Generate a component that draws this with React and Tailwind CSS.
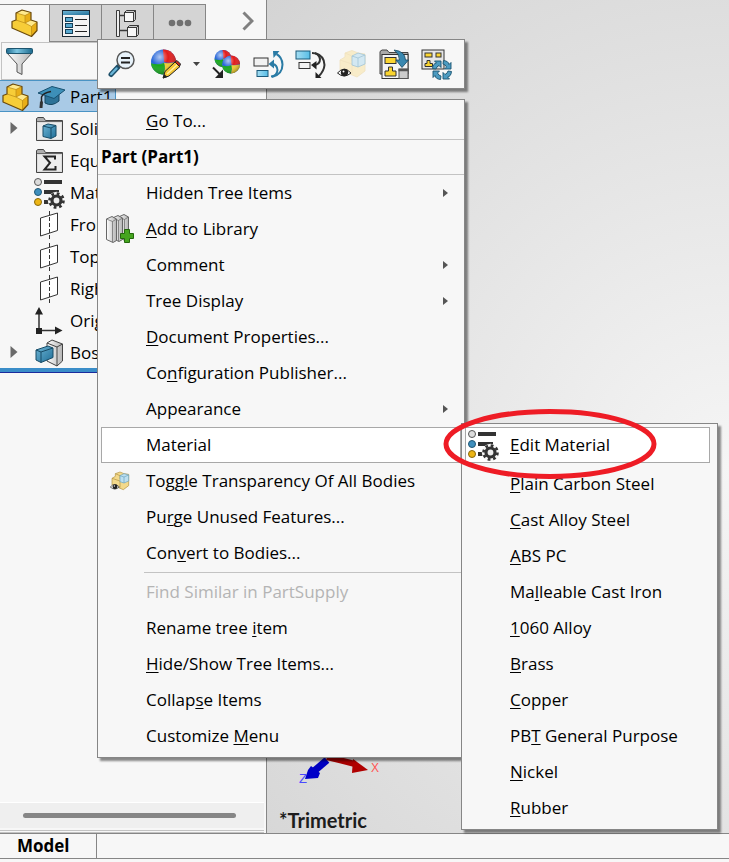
import { useState } from "react";

const treeItems = [
  { label: "Solids", icon: "solid", expandable: true },
  { label: "Equations", icon: "equations" },
  { label: "Material", icon: "material" },
  { label: "Front", icon: "plane" },
  { label: "Top", icon: "plane" },
  { label: "Right", icon: "plane" },
  { label: "Origin", icon: "origin" },
  { label: "Boss", icon: "boss", expandable: true },
];

// "&" marks the mnemonic letter
const partItems = [
  { label: "Hidden Tree Items", submenu: true },
  { label: "&Add to Library", icon: "library" },
  { label: "Comment", submenu: true },
  { label: "Tree Display", submenu: true },
  { label: "&Document Properties..." },
  { label: "Co&nfiguration Publisher..." },
  { label: "Appearance", submenu: true },
  { label: "Material", materials: true },
  { label: "Togg&le Transparency Of All Bodies", icon: "transparency" },
  { label: "Pu&rge Unused Features..." },
  { label: "Con&vert to Bodies..." },
];

const treeCommands = [
  { label: "Find Similar in PartSupply", disabled: true },
  { label: "Rename tree &item" },
  { label: "&Hide/Show Tree Items..." },
  { label: "Collap&se Items" },
  { label: "Customize &Menu" },
];

const materials = [
  "&Plain Carbon Steel",
  "&Cast Alloy Steel",
  "&ABS PC",
  "Ma&lleable Cast Iron",
  "&1060 Alloy",
  "&Brass",
  "&Copper",
  "PB&T General Purpose",
  "&Nickel",
  "&Rubber",
];

function Gradients() {
  return (
    <svg width="0" height="0" className="absolute" aria-hidden="true">
      <defs>
        <linearGradient id="blue" x1="0" y1="0" x2="1" y2="1">
          <stop offset="0" stopColor="#6fb6d6" />
          <stop offset="1" stopColor="#1f6e97" />
        </linearGradient>
        <linearGradient id="band" x1="0" y1="0" x2="1" y2="0">
          <stop offset="0" stopColor="#1d6a8e" />
          <stop offset="0.4" stopColor="#7cc6e2" />
          <stop offset="1" stopColor="#1d6a8e" />
        </linearGradient>
        <linearGradient id="sky" x1="0" y1="0" x2="1" y2="0">
          <stop offset="0" stopColor="#a6def3" />
          <stop offset="1" stopColor="#56bde6" />
        </linearGradient>
        <linearGradient id="steel" x1="0" y1="0" x2="1" y2="0">
          <stop offset="0" stopColor="#ffffff" />
          <stop offset="1" stopColor="#b4b4b4" />
        </linearGradient>
        <radialGradient id="shine" cx="0.35" cy="0.3" r="0.75">
          <stop offset="0" stopColor="#fff" stopOpacity="0.65" />
          <stop offset="0.45" stopColor="#fff" stopOpacity="0" />
          <stop offset="1" stopColor="#000" stopOpacity="0.35" />
        </radialGradient>
      </defs>
    </svg>
  );
}

function PartIcon() {
  return (
    <svg width="27" height="29" viewBox="0 0 27 29" strokeLinejoin="round">
      <path d="M5 4 11 1 20 3.500V11L26 13V21.500L20.500 27.500 1 19V12.500L5 11Z" fill="#f7cd38" />
      <path d="M5 4 11 1 20 3.500 14 6.500Z" fill="#ffe98c" />
      <path d="M14 14 20 11 26 13 20.500 17.500Z" fill="#ffe98c" />
      <path d="M20.500 17.500 26 13V21.500L20.500 27.500ZM14 6.500 20 3.500V11L14 14Z" fill="#e8ae17" />
      <path d="M5 4 14 6.500V14L20.500 17.500V27.500M5 11 14 14M14 6.500 20 3.500M14 14 20 11M20.500 17.500 26 13" fill="none" stroke="#b98a14" strokeWidth="0.700" />
      <path d="M5 4 11 1 20 3.500V11L26 13V21.500L20.500 27.500 1 19V12.500L5 11Z" fill="none" stroke="#6b4a0c" strokeWidth="1.200" />
    </svg>
  );
}

function PropertyIcon() {
  return (
    <svg width="28" height="27" viewBox="0 0 28 27">
      <rect x="0.500" y="0.500" width="27" height="26" fill="#f4f4f4" stroke="#1c2b36" />
      <rect x="1" y="1" width="26" height="4" fill="url(#blue)" />
      {[7.5, 13.5, 19.5].map((y) => (
        <g key={y}>
          <rect x="3.500" y={y} width="7" height="4" fill="#58a9cf" stroke="#153f58" />
          <path d={`M13 ${y + 2}H25`} stroke="#222" />
        </g>
      ))}
    </svg>
  );
}

function ConfigurationIcon() {
  return (
    <svg width="25" height="29" viewBox="0 0 25 29" fill="none" stroke="#3a3a3a">
      <path d="M1.500 1.500H4.500V27.500H1.500Z" fill="#eee" />
      <path d="M4.500 6.500H9M4.500 21.500H12" strokeWidth="1.500" />
      <path d="M9.500 3.500 11.500 1.500H20.500V10.500L18.500 12.500H9.500Z" fill="#ccc" />
      <rect x="9.500" y="3.500" width="9" height="9" fill="#f8f8f8" />
      <path d="M18.500 3.500 20.500 1.500" />
      <path d="M12.500 18.500 14.500 16.500H23.500V25.500L21.500 27.500H12.500Z" fill="#ccc" />
      <rect x="12.500" y="18.500" width="9" height="9" fill="#f8f8f8" />
      <path d="M21.500 18.500 23.500 16.500" />
    </svg>
  );
}

function FunnelIcon() {
  return (
    <svg width="27" height="29" viewBox="0 0 27 29">
      <path d="M1 6H26L16 17V27.500L11 25V17Z" fill="url(#steel)" stroke="#555" strokeLinejoin="round" />
      <rect x="0.500" y="1.500" width="26" height="5" rx="1" fill="url(#band)" stroke="#1d556f" />
    </svg>
  );
}

function CapIcon() {
  return (
    <svg width="29" height="25" viewBox="0 0 29 25">
      <path d="M8 11V18Q15 22 22 16V8Z" fill="#2d7297" stroke="#164761" />
      <path d="M1 8 15 1.500 28 5 17 13.500Z" fill="#3d8fb8" stroke="#175070" strokeLinejoin="round" />
      <path d="M14 6.500Q6 8 4.500 12V19" fill="none" stroke="#222" strokeWidth="1.500" />
      <path d="M3 16.500H6L5.500 23H2.500Z" fill="#333" />
    </svg>
  );
}

function Folder({ children }) {
  return (
    <svg width="29" height="26" viewBox="0 0 29 26">
      <path d="M1.500 24.500V2.500L3 1.500H8.500L10.500 4.500H27.500V24.500Z" fill="#aeaeae" stroke="#444" />
      <rect x="2.500" y="6.500" width="24" height="17" fill="#ececec" stroke="#ddd" />
      <path d="M2 5.500H27" stroke="#666" />
      {children}
    </svg>
  );
}

function MaterialIcon() {
  return (
    <svg width="31" height="31" viewBox="0 0 31 31">
      <path d="M10 4H28M10 14H25M10 24H16" stroke="#333" strokeWidth="4" />
      <circle cx="4" cy="4" r="3.500" fill="#dcdcdc" stroke="#555" />
      <circle cx="4" cy="14" r="3.500" fill="#3f8fbd" stroke="#1f5674" />
      <circle cx="4" cy="24" r="3.500" fill="#ecb516" stroke="#886709" />
      <circle cx="22.500" cy="22.500" r="7.200" fill="none" stroke="#f7f7f7" strokeWidth="3" />
      <circle cx="22.500" cy="22.500" r="7" fill="none" stroke="#333" strokeWidth="2.600" strokeDasharray="2.750 2.750" />
      <circle cx="22.500" cy="22.500" r="4.500" fill="#eee" stroke="#333" strokeWidth="3.200" />
    </svg>
  );
}

function PlaneIcon() {
  return (
    <svg width="19" height="28" viewBox="0 0 19 28" fill="none" stroke="#333">
      <path d="M0.500 7 17.500 2V19.500L0.500 25Z" fill="#fff" />
      <path d="M9.500 0V28" strokeDasharray="4 2" />
    </svg>
  );
}

function OriginIcon() {
  return (
    <svg width="28" height="28" viewBox="0 0 28 28" fill="#222">
      <path d="M4 24V6M4 23.500H22" stroke="#333" strokeWidth="1.500" />
      <path d="M4 0 8 7.500H0ZM27.500 23.500 20 27.500V19.500ZM1 21H7V27H1Z" />
    </svg>
  );
}

function BossIcon() {
  return (
    <svg width="29" height="28" viewBox="0 0 29 28" strokeLinejoin="round">
      <path d="M12 4 17 1 27.500 5V22L22 27 12 22Z" fill="url(#steel)" stroke="#444" />
      <path d="M12 4 22 8 27.500 5M22 8V27" fill="none" stroke="#444" />
      <path d="M1 11 13 7 18 9V18.500L6 23.500 1 21Z" fill="url(#blue)" stroke="#174b66" />
      <path d="M1 11 6 13 18 9M6 13V23.500" fill="none" stroke="#174b66" />
    </svg>
  );
}

const treeIcons = {
  solid: (
    <Folder>
      <path d="M8 10 13 8 21 9.500V20L16 22.500 8 20.500Z" fill="url(#blue)" stroke="#174b66" />
      <path d="M8 10 16 12 21 9.500M16 12V22" fill="none" stroke="#174b66" />
    </Folder>
  ),
  equations: (
    <Folder>
      <path d="M20 11.500V8.500H9.500L15 14.800 9.500 21.500H20.500V18" fill="none" stroke="#222" strokeWidth="2" />
    </Folder>
  ),
  material: <MaterialIcon />,
  plane: <PlaneIcon />,
  origin: <OriginIcon />,
  boss: <BossIcon />,
};

function LibraryIcon() {
  return (
    <svg width="29" height="30" viewBox="0 0 29 30" strokeLinejoin="round">
      {[12, 6, 0].map((x) => (
        <g key={x} transform={`translate(${x} ${-x / 6})`} stroke="#666">
          <path d="M0.500 5 6 2.500 10.500 5V26.500L7 28.500 0.500 25.500Z" fill="url(#steel)" />
          <path d="M0.500 5 6.500 7.500 10.500 5M6.500 7.500V28" fill="none" strokeWidth="0.700" />
        </g>
      ))}
      <path d="M18.500 15.500H23.500V19.500H27.500V24.500H23.500V28.500H18.500V24.500H14.500V19.500H18.500Z" fill="#45a51f" stroke="#24680d" />
    </svg>
  );
}

function TransparencyIcon({ size = 30, faded }) {
  return (
    <svg width={size} height={size} viewBox="0 0 30 30" strokeLinejoin="round">
      <g opacity={faded ? 0.6 : 1} stroke={faded ? "#ecd49a" : "#b0913f"} strokeWidth={faded ? 0.8 : 1}>
        <path d="M3 11 8 8V4L15 1.500 21 4 28 5V22L20 28 3 21Z" fill={faded ? "#fae6ac" : "#f3d98b"} />
        <path d="M3 11 15 15 28 10M15 15V25M8 4 15 7V12" fill="none" />
        <path d="M15 7 21 4 28 6V15L21 18 15 16Z" fill="#bcdff0" stroke="#6ba3c0" />
        <path d="M15 7 21 9 28 6M21 9V18" fill="none" stroke="#6ba3c0" />
      </g>
      <path d="M0.500 24Q7 16.500 14 24Q7 30 0.500 24Z" fill="#fff" stroke="#222" />
      <circle cx="7.500" cy="23.500" r="3.700" fill="#222" />
      <circle cx="6.500" cy="22.500" r="1" fill="#fff" />
    </svg>
  );
}

const menuIcons = {
  library: <LibraryIcon />,
  transparency: <TransparencyIcon size={20} />,
  material: <MaterialIcon />,
};

function Ball({ cx, cy, r }) {
  return (
    <g transform={`translate(${cx} ${cy}) scale(${r})`}>
      <circle r="1" fill="#2766d8" />
      <path d="M-0.050 -1A1 1 0 0 1 1 -0.050Q0.450 0.150 0.050 0Z" fill="#e21c1c" />
      <path d="M-1 0.100Q-0.500 0.300 0.050 0.050Q0.200 0.500 0 1A1 1 0 0 1 -1 0.100Z" fill="#17a81d" />
      <path d="M0.050 0.050Q0.500 0.150 1 0A1 1 0 0 1 0 1Q0.200 0.500 0.050 0.050Z" fill="#f2ce2b" />
      <circle r="1" fill="url(#shine)" />
    </g>
  );
}

function MagnifierIcon() {
  return (
    <svg width="28" height="28" viewBox="0 0 28 28">
      <path d="M10 17 3 24.500" stroke="#1d4f69" strokeWidth="5" strokeLinecap="round" />
      <path d="M8.500 18.500 3.300 24" stroke="#69b5d8" strokeWidth="2.500" strokeLinecap="round" />
      <circle cx="17.500" cy="10" r="8.500" fill="#e7f2fa" stroke="#555" strokeWidth="1.500" />
      <path d="M13 8H22M13 12.500H22" stroke="#222" strokeWidth="2" />
    </svg>
  );
}

function AppearanceIcon() {
  return (
    <svg width="31" height="32" viewBox="0 0 31 32">
      <Ball cx={13.500} cy={14} r={12.500} />
      <path d="M13 30 15 23.500 25 14 30 18.500 19 28Z" fill="#f5c534" stroke="#222" strokeLinejoin="round" />
      <path d="M17 26 27.500 16.500" stroke="#fff0a0" strokeWidth="1.500" />
      <path d="M25 14 27 12.500 30.500 16 29.500 18.500Z" fill="#c62a1c" stroke="#222" />
      <path d="M13 30.500 14 26 17.500 29Z" fill="#222" />
    </svg>
  );
}

function CopyAppearanceIcon() {
  return (
    <svg width="29" height="30" viewBox="0 0 29 30">
      <Ball cx={11} cy={9.500} r={8.500} />
      <Ball cx={19} cy={15.500} r={9} />
      <path d="M1 18.500 8 25.500" stroke="#222" strokeWidth="2" />
      <path d="M11 20.500V29H3Z" fill="#222" />
    </svg>
  );
}

function RollUpIcon() {
  return (
    <svg width="31" height="29" viewBox="0 0 31 29">
      <rect x="1" y="8" width="14" height="8" fill="#f2f2f2" stroke="#333" />
      <rect x="4" y="20.500" width="11" height="6" fill="url(#sky)" stroke="#1b5a7b" />
      <path d="M18 26.500Q24 26 24.500 20Q24 15 20 14" fill="none" stroke="#2a7ba5" strokeWidth="2" />
      <path d="M21 9.500V18.500L15.500 14Z" fill="#2a7ba5" />
      <path d="M19 27Q29.500 24.500 29.500 14.500Q29 7 23.500 4" fill="none" stroke="#2a7ba5" strokeWidth="2" />
      <path d="M20 1H26.500L20.500 8Z" fill="#2a7ba5" />
    </svg>
  );
}

function RollBackIcon() {
  return (
    <svg width="31" height="29" viewBox="0 0 31 29">
      <rect x="1" y="1" width="14" height="8" fill="url(#sky)" stroke="#1b5a7b" />
      <rect x="4" y="12.500" width="11" height="6" fill="#f2f2f2" stroke="#333" />
      <path d="M17 3Q24 3 25 9Q25 14 20 15" fill="none" stroke="#333" strokeWidth="2" />
      <path d="M21.500 11V19.500L16 15Z" fill="#222" />
      <path d="M20 3Q29.500 6 29.500 15Q29 21 24 26" fill="none" stroke="#333" strokeWidth="2" />
      <path d="M20.500 22V28H26.500Z" fill="#222" />
    </svg>
  );
}

function TreeFolderIcon() {
  return (
    <svg width="31" height="31" viewBox="0 0 31 31">
      <path d="M1 25V2.500L3 1H8L10 3.500H29V25Z" fill="#aaa" stroke="#444" />
      <rect x="3" y="5.500" width="26" height="24" fill="#f4f4f4" stroke="#333" />
      <rect x="6" y="8.500" width="11" height="6" fill="#fbd530" stroke="#333" />
      <path d="M9.500 18H13.500V22H17V27H6V22H9.500Z" fill="#fbd530" stroke="#333" />
      <rect x="20" y="20" width="9" height="9.500" fill="#ccc" stroke="#555" />
      <path d="M19.500 21H29" stroke="#555" strokeWidth="2.500" />
      <path d="M15 1Q26 2 26.500 11H29.500L23 18.500 17 11H20.500Q20.500 5 15 1Z" fill="#3a88b0" stroke="#164761" strokeWidth="0.800" />
    </svg>
  );
}

function RefreshTreeIcon() {
  return (
    <svg width="31" height="31" viewBox="0 0 31 31">
      <rect x="1" y="1" width="22" height="19" fill="#e6e6e6" stroke="#333" />
      <rect x="4" y="4" width="7" height="4" fill="#fbd530" stroke="#333" />
      <rect x="15" y="4" width="5" height="4" fill="#fbd530" stroke="#333" />
      <path d="M6 11.500H9V14.500H11.500V17.500H4V14.500H6Z" fill="#fbd530" stroke="#333" />
      {[0, 90, 180, 270].map((angle) => (
        <path
          key={angle}
          transform={`rotate(${angle} 21 21)`}
          d="M11.500 19.500Q12 14.500 15.500 14L13.500 12H20V18.500L18 16.500Q15.500 17.500 15 20Z"
          fill="#4c9bc1"
          stroke="#1a546f"
          strokeWidth="0.900"
        />
      ))}
    </svg>
  );
}

function MenuLabel({ text }) {
  const at = text.indexOf("&");
  if (at < 0) return <span>{text}</span>;
  return (
    <span>
      {text.slice(0, at)}
      <span className="underline decoration-1 underline-offset-2">{text[at + 1]}</span>
      {text.slice(at + 2)}
    </span>
  );
}

function MenuRow({ label, icon, submenu, disabled, selected, className = "", onClick }) {
  return (
    <button
      type="button"
      role="menuitem"
      disabled={disabled}
      onClick={onClick}
      className={`flex h-9 items-center border text-left whitespace-nowrap ${
        selected ? "border-[#a8a8a8] bg-white" : "border-transparent"
      } ${disabled ? "text-[#b4b4b4]" : "text-black"} ${className}`}
    >
      <span
        className={`flex w-11 shrink-0 items-center ${
          icon === "transparency" ? "pl-2" : icon === "material" ? "pl-0.5" : "pl-1"
        }`}
      >
        {menuIcons[icon]}
      </span>
      <MenuLabel text={label} />
      {submenu && (
        <svg width="5" height="8" viewBox="0 0 5 8" className="mr-3 ml-auto" fill="#555">
          <path d="M0 0 5 4 0 8Z" />
        </svg>
      )}
    </button>
  );
}

function MaterialMenu() {
  return (
    <ul
      role="menu"
      aria-label="Material"
      className="absolute -top-1 left-[363px] z-10 w-[257px] border border-[#868686] bg-[#f7f7f7] py-[3px] shadow-[3px_3px_2px_rgba(0,0,0,0.45)]"
    >
      <li className="mb-[3px] flex pr-[7px] pl-[3px]">
        <MenuRow label="&Edit Material" icon="material" selected className="flex-1" />
      </li>
      {materials.map((name) => (
        <li key={name} className="flex px-[3px]">
          <MenuRow label={name} className="flex-1" />
        </li>
      ))}
    </ul>
  );
}

function ContextMenu() {
  const [open, setOpen] = useState(true);

  return (
    <ul
      role="menu"
      aria-label="Part"
      className="absolute top-[99px] left-[97px] w-[368px] border border-[#868686] bg-[#f7f7f7] py-[3px] shadow-[3px_3px_2px_rgba(0,0,0,0.45)]"
    >
      <li className="flex px-[3px]">
        <MenuRow label="&Go To..." className="flex-1" />
      </li>
      <li className="flex h-9 items-center border-y border-[#c3c3c3] px-[3px] font-bold">Part (Part1)</li>
      {partItems.map((item) => (
        <li key={item.label} className="relative flex px-[3px]">
          <MenuRow
            {...item}
            selected={item.materials}
            className="flex-1"
            onClick={item.materials ? () => setOpen(!open) : undefined}
          />
          {item.materials && open && <MaterialMenu />}
        </li>
      ))}
      <li role="separator" className="my-px ml-[46px] h-px bg-[#c3c3c3]" />
      {treeCommands.map((item) => (
        <li key={item.label} className="flex px-[3px]">
          <MenuRow {...item} className="flex-1" />
        </li>
      ))}
    </ul>
  );
}

function ToolButton({ label, width = "w-[42px]", children }) {
  return (
    <button type="button" aria-label={label} className={`flex shrink-0 items-center justify-center ${width}`}>
      {children}
    </button>
  );
}

function ContextToolbar() {
  return (
    <div
      role="toolbar"
      className="absolute top-[39px] left-[97px] flex h-[50px] w-[368px] border border-[#868686] bg-[#f7f7f7] px-[3px] shadow-[3px_3px_2px_rgba(0,0,0,0.45)]"
    >
      <ToolButton label="Zoom to selection"><MagnifierIcon /></ToolButton>
      <ToolButton label="Appearances" width="w-11"><AppearanceIcon /></ToolButton>
      <ToolButton label="More appearances" width="w-[18px]">
        <svg width="7" height="4" viewBox="0 0 7 4" fill="#444">
          <path d="M0 0H7L3.500 4Z" />
        </svg>
      </ToolButton>
      <ToolButton label="Copy appearance"><CopyAppearanceIcon /></ToolButton>
      <ToolButton label="Roll to previous"><RollUpIcon /></ToolButton>
      <ToolButton label="Roll forward"><RollBackIcon /></ToolButton>
      <ToolButton label="Change transparency"><TransparencyIcon faded /></ToolButton>
      <ToolButton label="Add to new folder"><TreeFolderIcon /></ToolButton>
      <ToolButton label="Refresh tree"><RefreshTreeIcon /></ToolButton>
    </div>
  );
}

function FeatureTree() {
  return (
    <aside className="flex w-[267px] shrink-0 flex-col overflow-hidden border-r border-[#868686] bg-[#f7f7f7] pt-1">
      <div className="flex h-[38px] items-stretch">
        <button type="button" aria-label="Feature tree" className="flex w-[49px] items-center justify-center border-t border-[#868686]">
          <PartIcon />
        </button>
        <button type="button" aria-label="Properties" className="flex w-[53px] items-center justify-center border border-[#868686] bg-[#d4d4d4]">
          <PropertyIcon />
        </button>
        <button type="button" aria-label="Configurations" className="flex w-[52px] items-center justify-center border-y border-r border-[#868686] bg-[#d4d4d4]">
          <ConfigurationIcon />
        </button>
        <button type="button" aria-label="More tabs" className="flex w-[52px] items-center justify-center border-y border-r border-[#868686] bg-[#d4d4d4]">
          <svg width="24" height="8" viewBox="0 0 24 8" fill="#707070">
            <circle cx="4" cy="4" r="3.300" />
            <circle cx="12" cy="4" r="3.300" />
            <circle cx="20" cy="4" r="3.300" />
          </svg>
        </button>
        <button type="button" aria-label="Next tabs" className="flex flex-1 items-center justify-center pb-1 pl-6">
          <svg width="12" height="20" viewBox="0 0 12 20" fill="none" stroke="#808080" strokeWidth="3">
            <path d="M1.500 1.500 10 10 1.500 18.500" />
          </svg>
        </button>
      </div>
      <label className="mx-px flex h-[38px] items-center border border-[#c3c3c3] pl-1">
        <FunnelIcon />
        <input type="text" aria-label="Filter" className="ml-2 min-w-0 flex-1 bg-transparent outline-none" />
      </label>
      <div className="flex h-8 w-[116px] items-center border-y border-r border-[#4a93c4] bg-[#a9cae6] pt-0.5 pl-0.5">
        <PartIcon />
        <span className="ml-2 flex w-[33px] shrink-0"><CapIcon /></span>
        <span>Part1</span>
      </div>
      <ul id="tree">
        {treeItems.map((item) => (
          <li key={item.label} className="flex h-8 items-center pt-0.5 whitespace-nowrap">
            <span className="w-8 shrink-0 pl-2.5">
              {item.expandable && (
                <svg width="8" height="12" viewBox="0 0 8 12" fill="#6a6a6a" className="mb-0.5">
                  <path d="M0.500 0 7.500 6 0.500 12Z" />
                </svg>
              )}
            </span>
            <span className="flex w-[38px] shrink-0 items-center justify-center pr-1">{treeIcons[item.icon]}</span>
            <span>{item.label}</span>
          </li>
        ))}
      </ul>
      <div className="h-[5px] border-b border-[#1a2a9c] bg-[#3a8dc8]" />
      <div className="mt-auto mr-0.5 border-t border-white bg-[#efefef] pt-2.5 pr-7 pb-2.5 pl-[23px]">
        <div role="scrollbar" aria-controls="tree" aria-valuenow={0} aria-orientation="horizontal" className="h-[5px] rounded-full bg-[#868686]" />
      </div>
      <div className="mt-0.5 mr-0.5 h-[3px] border-y border-[#c3c3c3]" />
    </aside>
  );
}

function Viewport() {
  return (
    <main className="flex flex-1 flex-col justify-end bg-[radial-gradient(circle_at_100%_56%,#f5f5f5_0%,#e6e6e6_45%,#d4d4d4_100%)] pl-3">
      <svg width="100" height="50" viewBox="0 0 100 50" className="ml-5" role="img" aria-label="Orientation triad">
        <path d="M28 14 14 26" stroke="#0000c0" strokeWidth="7" />
        <path d="M12 20 21 27 19 32 6 33 9 24Z" fill="#0000c8" />
        <path d="M28 11 56 18" stroke="#a80000" strokeWidth="6" />
        <path d="M54 13 69 24 53 27Z" fill="#b00000" />
        <text x="0" y="37" fontSize="13" fill="#4a4aff" fontFamily="Liberation Sans, sans-serif">Z</text>
        <text x="72" y="26" fontSize="12" fill="#ff5555" fontFamily="Liberation Sans, sans-serif">X</text>
      </svg>
      <span className="mt-3 pb-px font-[Lato,sans-serif] text-xl leading-6 font-bold text-[#1c1c1c]">*Trimetric</span>
    </main>
  );
}

export default function App() {
  return (
    <div className="relative flex min-h-screen flex-col overflow-hidden bg-[#f7f7f7] font-['Open_Sans',sans-serif] text-[17px] leading-6 text-black">
      <Gradients />
      <div className="flex flex-1">
        <FeatureTree />
        <Viewport />
      </div>
      <footer className="mb-[3px] flex h-[26px] items-stretch border-y border-[#868686]">
        <button type="button" className="flex w-[97px] items-center border-r border-[#868686] pl-[17px] font-bold">
          Model
        </button>
      </footer>
      <ContextToolbar />
      <ContextMenu />
      {/* Callout around Edit Material */}
      <svg
        width="214"
        height="72"
        viewBox="0 0 214 72"
        className="pointer-events-none absolute top-[408px] left-[443px] z-20"
        aria-hidden="true"
      >
        <ellipse cx="107" cy="36" rx="104" ry="32.500" fill="none" stroke="#ee1c25" strokeWidth="5" />
      </svg>
    </div>
  );
}
